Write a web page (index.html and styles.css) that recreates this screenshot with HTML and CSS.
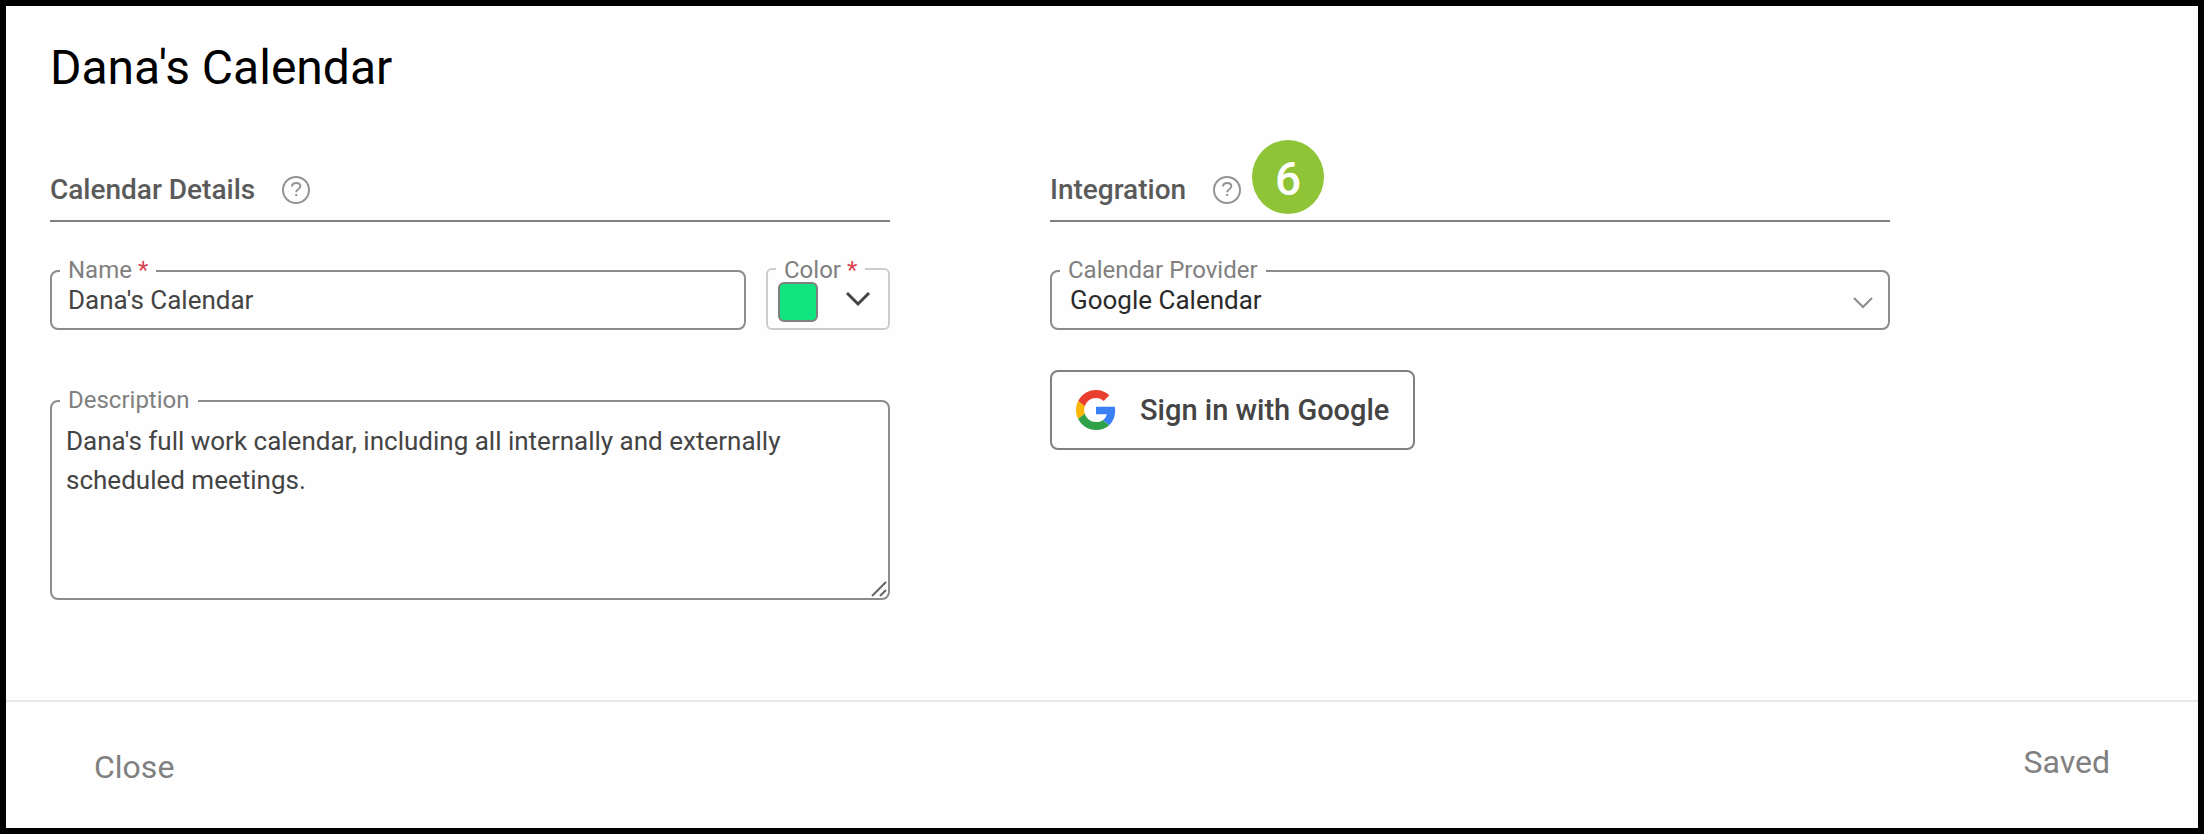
FILE: index.html
```html
<!DOCTYPE html>
<html lang="en">
<head>
    <meta charset="UTF-8">
    <meta name="viewport" content="width=device-width, initial-scale=1.0">
    <title>Dana's Calendar</title>
    <link rel="stylesheet" href="styles.css">
</head>
<body>
    <form class="dialog">
        <main class="content">
            <h1>Dana's Calendar</h1>

            <div class="columns">
                <section>
                    <div class="section-head">
                        <h2>Calendar Details</h2>
                        <button type="button" class="help" aria-label="Help">
                            <svg viewBox="0 0 28 28"><circle cx="14" cy="14" r="13"/><path d="M10 10.600c0-2.300 1.700-3.600 4.200-3.600 2.500 0 4.100 1.300 4.100 3.300 0 1.700-1 2.400-2.300 3.200-1.200.7-1.800 1.300-1.800 2.800"/><path d="M14.200 18v2"/></svg>
                        </button>
                    </div>

                    <div class="row">
                        <div class="field name-field">
                            <label for="name">Name <span class="required">*</span></label>
                            <input type="text" id="name" class="control" value="Dana's Calendar" required>
                        </div>
                        <div class="field color-field">
                            <label for="color">Color <span class="required">*</span></label>
                            <button type="button" id="color" class="color-btn">
                                <span class="swatch"></span>
                                <svg class="color-arrow" viewBox="0 0 26 16"><path d="M2 2l11 11L24 2"/></svg>
                            </button>
                        </div>
                    </div>

                    <div class="field description-field">
                        <label for="description">Description</label>
                        <textarea id="description" class="control">Dana's full work calendar, including all internally and externally scheduled meetings.</textarea>
                        <svg class="grip" viewBox="0 0 16 16"><path d="M1 15L15 1M9 15l6-6"/></svg>
                    </div>
                </section>

                <section>
                    <div class="section-head">
                        <h2>Integration</h2>
                        <button type="button" class="help" aria-label="Help">
                            <svg viewBox="0 0 28 28"><circle cx="14" cy="14" r="13"/><path d="M10 10.600c0-2.300 1.700-3.600 4.200-3.600 2.500 0 4.100 1.300 4.100 3.300 0 1.700-1 2.400-2.300 3.200-1.200.7-1.800 1.300-1.800 2.800"/><path d="M14.200 18v2"/></svg>
                            <span class="step">6</span>
                        </button>
                    </div>

                    <div class="field">
                        <label for="provider">Calendar Provider</label>
                        <select id="provider" class="control">
                            <option>Google Calendar</option>
                        </select>
                        <svg class="select-arrow" viewBox="0 0 20 12"><path d="M1 1l9 9 9-9"/></svg>
                    </div>

                    <button type="button" class="google-btn">
                        <svg viewBox="0 0 48 48">
                            <path fill="#ea3e30" d="M24 9.500c3.540 0 6.710 1.220 9.210 3.600l6.850-6.850C35.900 2.380 30.470 0 24 0 14.620 0 6.510 5.380 2.560 13.220l7.980 6.190C12.430 13.720 17.740 9.500 24 9.500z"/>
                            <path fill="#3b7ff5" d="M46.980 24.550c0-1.570-.15-3.090-.38-4.550H24v9.020h12.940c-.58 2.960-2.260 5.480-4.780 7.180l7.730 6c4.510-4.180 7.090-10.360 7.090-17.650z"/>
                            <path fill="#fbb505" d="M10.530 28.590c-.48-1.450-.76-2.990-.76-4.590s.27-3.140.76-4.590l-7.980-6.190C.92 16.460 0 20.120 0 24c0 3.880.92 7.540 2.560 10.780l7.970-6.190z"/>
                            <path fill="#2ea149" d="M24 48c6.480 0 11.930-2.130 15.890-5.810l-7.730-6c-2.150 1.450-4.920 2.300-8.160 2.300-6.260 0-11.570-4.220-13.470-9.910l-7.980 6.190C6.510 42.620 14.620 48 24 48z"/>
                        </svg>
                        Sign in with Google
                    </button>
                </section>
            </div>
        </main>

        <footer class="footer">
            <button type="button" class="close-btn">Close</button>
            <button type="submit" class="save-btn" disabled>Saved</button>
        </footer>
    </form>
</body>
</html>
```
FILE: styles.css
```css
* {
    margin: 0;
    padding: 0;
    box-sizing: border-box;
}

body {
    font-family: Roboto, Arial, sans-serif;
    background: #fefefe;
    color: #444;
}

button,
input,
select,
textarea {
    font: inherit;
    color: inherit;
    background: none;
    border: none;
    outline: none;
}

button {
    cursor: pointer;
}

svg {
    fill: none;
    display: block;
}

.dialog {
    min-height: 100vh;
    border: 6px solid #000;
    display: flex;
    flex-direction: column;
}

.content {
    flex: 1;
    padding: 34px 44px 48px;
}

h1 {
    font-size: 48px;
    line-height: 56px;
    font-weight: 400;
    color: #000;
    margin-bottom: 78px;
}

.columns {
    display: grid;
    grid-template-columns: repeat(2, minmax(0, 840px));
    gap: 160px;
}

/* Section headings */
.section-head {
    display: flex;
    align-items: center;
    gap: 27px;
    padding-bottom: 14px;
    border-bottom: 2px solid #808080;
    margin-bottom: 48px;
}

h2 {
    font-size: 28px;
    line-height: 32px;
    font-weight: 500;
    color: #5a5a5a;
}

.help {
    position: relative;
    width: 28px;
    height: 28px;
}

.help svg {
    stroke: #939393;
    stroke-width: 2;
}

.step {
    position: absolute;
    left: 39px;
    bottom: -10px;
    width: 72px;
    height: 74px;
    border-radius: 50%;
    background: #8fc436;
    color: #fff;
    font-size: 46px;
    line-height: 78px;
    font-weight: 500;
    text-align: center;
}

/* Form fields */
.row {
    display: flex;
    align-items: flex-end;
    gap: 20px;
    margin-bottom: 70px;
}

.field {
    position: relative;
}

.name-field {
    flex: 1;
}

.field label {
    position: absolute;
    top: -16px;
    left: 10px;
    padding: 0 8px;
    background: #fefefe;
    color: #808080;
    font-size: 24px;
    line-height: 32px;
}

.required {
    color: #d9434e;
}

.control {
    display: block;
    width: 100%;
    height: 60px;
    padding: 0 16px;
    border: 2px solid #8c8c8c;
    border-radius: 8px;
    font-size: 26px;
}

select.control {
    appearance: none;
    padding: 0 18px;
    color: #2a2a2a;
}

textarea.control {
    height: 200px;
    padding: 20px 14px;
    line-height: 39px;
    resize: none;
}

/* slightly taller than the inputs, grows upwards */
.color-btn {
    display: flex;
    align-items: center;
    gap: 27px;
    width: 124px;
    height: 62px;
    margin-top: -2px;
    padding: 6px 10px 0;
    border: 2px solid #ccc;
    border-radius: 6px;
}

.swatch {
    position: relative;
    z-index: 1;
    width: 40px;
    height: 40px;
    background: #12e47f;
    border: 2px solid #808080;
    border-radius: 6px;
}

.color-arrow {
    width: 26px;
    height: 16px;
    margin-bottom: 6px;
    stroke: #444;
    stroke-width: 3;
}

.select-arrow {
    position: absolute;
    right: 17px;
    bottom: 21px;
    width: 20px;
    height: 12px;
    stroke: #8c8c8c;
    stroke-width: 2;
    pointer-events: none;
}

.grip {
    position: absolute;
    right: 3px;
    bottom: 3px;
    width: 16px;
    height: 16px;
    stroke: #666;
    stroke-width: 2;
    pointer-events: none;
}

.google-btn {
    display: flex;
    align-items: center;
    gap: 24px;
    height: 80px;
    margin-top: 40px;
    padding: 0 24px;
    border: 2px solid #808080;
    border-radius: 8px;
    font-size: 29px;
    font-weight: 500;
}

.google-btn svg {
    width: 40px;
    height: 40px;
}

/* Footer */
.footer {
    display: flex;
    justify-content: space-between;
    align-items: flex-start;
    height: 128px;
    padding: 40px 88px 0;
    border-top: 2px solid #e8e8e8;
}

.footer button {
    font-size: 32px;
    line-height: 40px;
    color: #808080;
}

.close-btn {
    padding-top: 5px;
}
```
